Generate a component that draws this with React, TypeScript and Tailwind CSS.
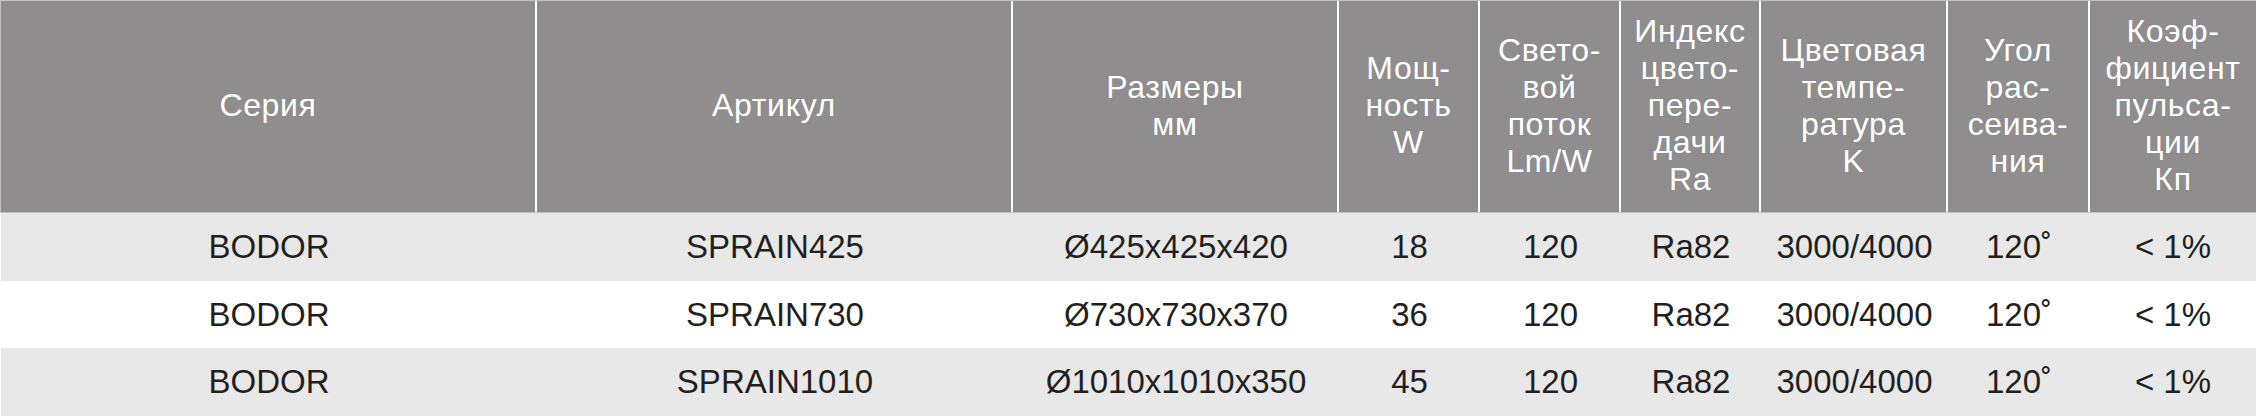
const cols = "grid grid-cols-[536px_476px_326px_141px_141px_140px_187px_142px_166px]";

const header: string[][] = [
  ["Серия"],
  ["Артикул"],
  ["Размеры", "мм"],
  ["Мощ-", "ность", "W"],
  ["Свето-", "вой", "поток", "Lm/W"],
  ["Индекс", "цвето-", "пере-", "дачи", "Ra"],
  ["Цветовая", "темпе-", "ратура", "K"],
  ["Угол", "рас-", "сеива-", "ния"],
  ["Коэф-", "фициент", "пульса-", "ции", "Кп"],
];

const rows: string[][] = [
  ["BODOR", "SPRAIN425", "Ø425x425x420", "18", "120", "Ra82", "3000/4000", "120˚", "< 1%"],
  ["BODOR", "SPRAIN730", "Ø730x730x370", "36", "120", "Ra82", "3000/4000", "120˚", "< 1%"],
  ["BODOR", "SPRAIN1010", "Ø1010x1010x350", "45", "120", "Ra82", "3000/4000", "120˚", "< 1%"],
];

const rowStyles = [
  "h-[68px] bg-[#e8e8e8]",
  "h-[67px] bg-white",
  "h-[68px] bg-[#e8e8e8]",
];

export default function App() {
  return (
    <div className="w-[2258px] h-[416px] bg-white font-['Liberation_Sans',Arial,sans-serif]">
      {/* Header */}
      <div className={`${cols} w-[2256px] h-[213px] border-t border-l border-b border-[#c2c2c2]`}>
        {header.map((lines, i) => (
          <div
            key={i}
            className={`flex items-center justify-center text-center bg-[#8f8d8e] text-white text-[32px] leading-[37px] tracking-[0.02em] ${
              i < header.length - 1 ? "border-r-2 border-white" : ""
            }`}
          >
            <div className="pb-[2px]">
              {lines.map((l) => (
                <div key={l}>{l}</div>
              ))}
            </div>
          </div>
        ))}
      </div>

      {/* Body */}
      {rows.map((r, ri) => (
        <div key={ri} className={`${cols} w-[2255px] ml-[1px] ${rowStyles[ri]}`}>
          {r.map((c, ci) => (
            <div
              key={ci}
              className="flex items-center justify-center text-[33px] text-[#231f20] whitespace-nowrap"
            >
              {c}
            </div>
          ))}
        </div>
      ))}
    </div>
  );
}
